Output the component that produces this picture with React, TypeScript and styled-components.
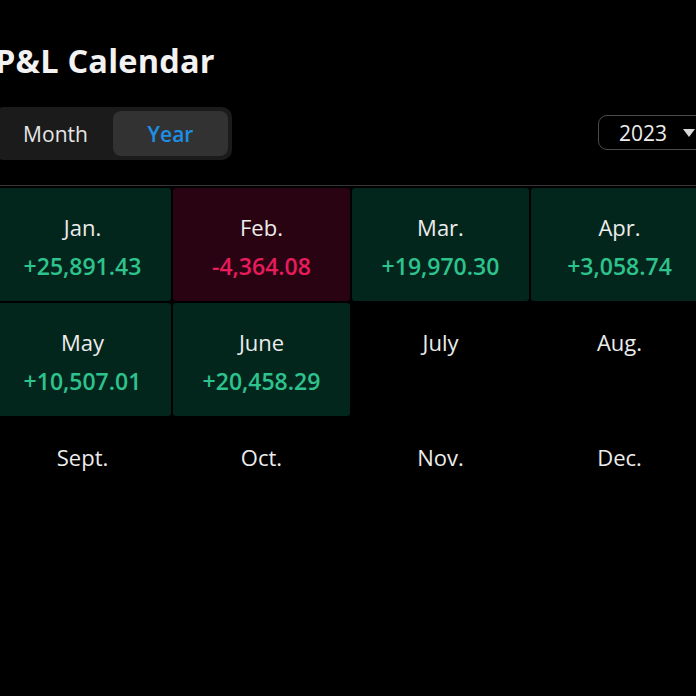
import React from 'react';
import styled, { createGlobalStyle } from 'styled-components';

// Types
type Tone = 'gain' | 'loss' | 'none';

interface MonthEntry {
  label: string;
  value?: number;
}

// Data
const months: MonthEntry[] = [
  { label: 'Jan.', value: 25891.43 },
  { label: 'Feb.', value: -4364.08 },
  { label: 'Mar.', value: 19970.3 },
  { label: 'Apr.', value: 3058.74 },
  { label: 'May', value: 10507.01 },
  { label: 'June', value: 20458.29 },
  { label: 'July' },
  { label: 'Aug.' },
  { label: 'Sept.' },
  { label: 'Oct.' },
  { label: 'Nov.' },
  { label: 'Dec.' },
];

const formatPnl = (value: number) => {
  const sign = value >= 0 ? '+' : '-';
  const abs = Math.abs(value).toLocaleString('en-US', {
    minimumFractionDigits: 2,
    maximumFractionDigits: 2,
  });
  return `${sign}${abs}`;
};

const toneOf = (value?: number): Tone => {
  if (value === undefined) return 'none';
  return value >= 0 ? 'gain' : 'loss';
};

// Styled Components
const GlobalStyle = createGlobalStyle`
  html, body {
    margin: 0;
    padding: 0;
    background: #000;
  }
  body {
    font-family: "Open Sans", "Noto Sans", sans-serif;
    color: #e8e8e8;
  }
`;

const Page = styled.div`
  background: #000;
  min-height: 696px;
  width: 696px;
  overflow: hidden;
  padding-top: 42px;
  box-sizing: border-box;
`;

const Content = styled.div`
  margin-left: -6px;
  width: 714px;
`;

const Title = styled.h1`
  margin: 0;
  padding-left: 1px;
  font-size: 32.5px;
  line-height: 37px;
  font-weight: 700;
  color: #f2f2f2;
  letter-spacing: 0.2px;
`;

const Controls = styled.div`
  display: flex;
  align-items: center;
  justify-content: space-between;
  margin-top: 28px;
  height: 53px;
`;

const Segmented = styled.div`
  display: flex;
  padding: 4px;
  background: #1b1b1b;
  border-radius: 10px;
  box-sizing: border-box;
  height: 53px;
`;

const Segment = styled.button<{ $active?: boolean }>`
  width: 115px;
  height: 45px;
  border: none;
  border-radius: 8px;
  background: ${({ $active }) => ($active ? '#323232' : 'transparent')};
  color: ${({ $active }) => ($active ? '#1d8fe6' : '#e6e6e6')};
  font-family: "Open Sans", "Noto Sans", sans-serif;
  font-size: 21px;
  font-weight: ${({ $active }) => ($active ? 600 : 400)};
  cursor: pointer;
  padding: 0;
`;

const YearSelect = styled.div`
  display: flex;
  align-items: center;
  justify-content: space-between;
  width: 110px;
  height: 35px;
  box-sizing: border-box;
  margin-top: -2px;
  padding: 0 12px 0 20px;
  border: 1px solid #4a4a4a;
  border-radius: 9px;
  font-size: 21px;
  color: #eeeeee;
`;

const Caret = styled.span`
  width: 0;
  height: 0;
  border-left: 6px solid transparent;
  border-right: 6px solid transparent;
  border-top: 8px solid #d8d8d8;
`;

const Divider = styled.div`
  height: 1px;
  background: #353535;
  margin-top: 25px;
`;

const Grid = styled.div`
  display: grid;
  grid-template-columns: repeat(4, 177px);
  grid-auto-rows: 113px;
  gap: 2px;
  margin-top: 2px;
`;

const cellBg: Record<Tone, string> = {
  gain: '#03261c',
  loss: '#2a0313',
  none: 'transparent',
};

const valueColor: Record<Tone, string> = {
  gain: '#2ec38e',
  loss: '#e81c5c',
  none: 'transparent',
};

const Cell = styled.div<{ $tone: Tone }>`
  display: flex;
  flex-direction: column;
  align-items: center;
  justify-content: center;
  gap: 7px;
  padding-top: 5px;
  box-sizing: border-box;
  background: ${({ $tone }) => cellBg[$tone]};
  border-radius: 3px;
`;

const MonthLabel = styled.div`
  font-size: 22px;
  line-height: 31px;
  color: #ececec;
`;

const Value = styled.div<{ $tone: Tone }>`
  font-size: 23px;
  line-height: 32px;
  font-weight: 600;
  color: ${({ $tone }) => valueColor[$tone]};
  min-height: 32px;
`;

// Component
const App: React.FC = () => {
  const [mode, setMode] = React.useState<'month' | 'year'>('year');

  return (
    <>
      <GlobalStyle />
      <Page>
        <Content>
          <Title>P&amp;L Calendar</Title>

          <Controls>
            <Segmented>
              <Segment $active={mode === 'month'} onClick={() => setMode('month')}>
                Month
              </Segment>
              <Segment $active={mode === 'year'} onClick={() => setMode('year')}>
                Year
              </Segment>
            </Segmented>

            <YearSelect>
              <span>2023</span>
              <Caret />
            </YearSelect>
          </Controls>

          <Divider />

          <Grid>
            {months.map((m) => {
              const tone = toneOf(m.value);
              return (
                <Cell key={m.label} $tone={tone}>
                  <MonthLabel>{m.label}</MonthLabel>
                  <Value $tone={tone}>
                    {m.value !== undefined ? formatPnl(m.value) : ''}
                  </Value>
                </Cell>
              );
            })}
          </Grid>
        </Content>
      </Page>
    </>
  );
};

export default App;
